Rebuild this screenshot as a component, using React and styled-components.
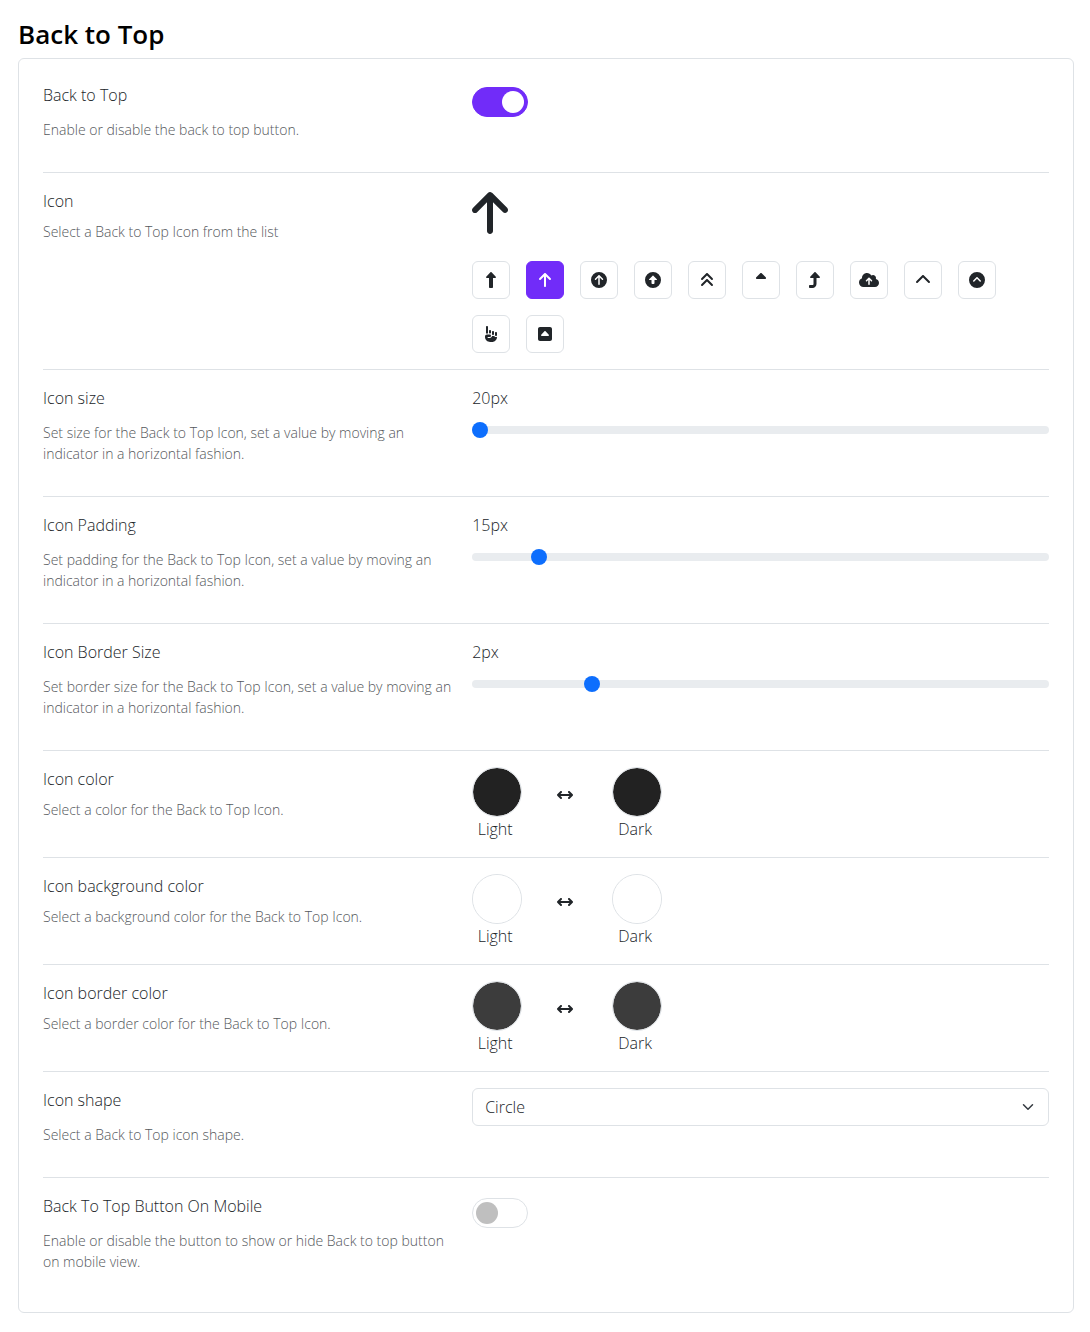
import React, { useState } from "react";
import styled, { createGlobalStyle } from "styled-components";
import {
  FaUpLong,
  FaArrowUp,
  FaCircleArrowUp,
  FaCircleUp,
  FaAnglesUp,
  FaSortUp,
  FaTurnUp,
  FaCloudArrowUp,
  FaChevronUp,
  FaCircleChevronUp,
  FaHandPointUp,
  FaSquareCaretUp,
  FaArrowsLeftRight,
} from "react-icons/fa6";

const ink = "#212529";
const line = "#dee2e6";
const accent = "#712cf9";

const GlobalStyle = createGlobalStyle`
  *, *::before, *::after { box-sizing: border-box; }
  body {
    margin: 0;
    background: #fff;
    color: ${ink};
    font-family: "Segoe UI", "Open Sans", "Noto Sans", sans-serif;
    font-size: 16px;
    font-weight: 300;
    line-height: 24px;
  }
`;

const Page = styled.main`
  padding: 16px 16px 18px 18px;
`;

const Title = styled.h1`
  margin: 0 0 6px;
  color: #000;
  font-size: 26px;
  font-weight: 600;
  line-height: 36px;
`;

const Card = styled.section`
  padding: 8px 24px;
  border: 1px solid ${line};
  border-radius: 6px;
`;

const Row = styled.div`
  padding: 16px 0;
  border-bottom: 1px solid ${line};

  &:last-child {
    border-bottom: 0;
  }
`;

const Columns = styled.div`
  display: grid;
  grid-template-columns: minmax(0, 5fr) minmax(0, 7fr);
  margin: 0 -12px;
`;

const TextCell = styled.div`
  padding: 0 8px 0 12px;
`;

const ControlCell = styled.div`
  padding: 0 12px;
`;

const Name = styled.label`
  display: block;
`;

const Hint = styled.p`
  margin: ${(p) => (p.$compact ? "8px 0 0" : "12px 0 16px")};
  color: #55585c;
  font-size: 14px;
  line-height: 21px;
`;

const Switch = styled.input`
  appearance: none;
  display: flex;
  align-items: center;
  width: 56px;
  height: 30px;
  margin: 4px 0;
  padding: 0 3px;
  border: 1px solid ${line};
  border-radius: 15px;
  background: #fff;
  cursor: pointer;

  &::before {
    content: "";
    width: 22px;
    height: 22px;
    border-radius: 50%;
    background: #bfbfbf;
  }

  &:checked {
    justify-content: flex-end;
    border-color: ${accent};
    background: ${accent};
  }

  &:checked::before {
    background: #fff;
  }
`;

const Preview = styled.div`
  display: flex;
  margin-bottom: 24px;

  svg {
    width: 36px;
    height: 48px;
  }
`;

const IconList = styled.div`
  display: flex;
  flex-wrap: wrap;
  gap: 16px;
`;

const IconButton = styled.button`
  display: flex;
  align-items: center;
  justify-content: center;
  width: 38px;
  height: 38px;
  padding: 0;
  border: 1px solid ${(p) => (p.$active ? accent : line)};
  border-radius: 6px;
  background: ${(p) => (p.$active ? accent : "#fff")};
  color: ${(p) => (p.$active ? "#fff" : ink)};
  font-size: 16px;
  cursor: pointer;

  svg {
    width: 20px;
    height: 16px;
  }
`;

const Value = styled.output`
  display: block;
  margin-bottom: 8px;
`;

const Range = styled.input`
  appearance: none;
  display: block;
  width: 100%;
  height: 24px;
  margin: 0;
  background: transparent;

  &::-webkit-slider-runnable-track {
    height: 8px;
    border-radius: 8px;
    background: #e9ecef;
  }

  &::-webkit-slider-thumb {
    appearance: none;
    width: 16px;
    height: 16px;
    margin-top: -4px;
    border-radius: 50%;
    background: #0d6efd;
  }
`;

const Pair = styled.div`
  display: flex;
  align-items: flex-start;
  gap: 39px;
`;

const Swatch = styled.div`
  width: 46px;
`;

const SwatchInput = styled.input`
  appearance: none;
  display: block;
  width: 50px;
  height: 50px;
  padding: 0;
  border: 1px solid ${line};
  border-radius: 50%;
  background: transparent;
  cursor: pointer;

  &::-webkit-color-swatch-wrapper {
    padding: 0;
  }

  &::-webkit-color-swatch {
    border: 0;
    border-radius: 50%;
  }
`;

const SwatchName = styled.label`
  display: block;
  text-align: center;
`;

const Between = styled.div`
  display: flex;
  align-items: center;
  height: 56px;
  font-size: 16px;
`;

const SelectBox = styled.div`
  position: relative;

  svg {
    position: absolute;
    top: 13px;
    right: 15px;
    pointer-events: none;
  }
`;

const Select = styled.select`
  appearance: none;
  display: block;
  width: 100%;
  height: 38px;
  padding: 0 36px 0 12px;
  border: 1px solid ${line};
  border-radius: 6px;
  background: #fff;
  color: inherit;
  font: inherit;
`;

const icons = [
  ["Long arrow", FaUpLong],
  ["Arrow", FaArrowUp],
  ["Circled thin arrow", FaCircleArrowUp],
  ["Circled arrow", FaCircleUp],
  ["Double angle", FaAnglesUp],
  ["Caret", FaSortUp],
  ["Turn up", FaTurnUp],
  ["Cloud arrow", FaCloudArrowUp],
  ["Chevron", FaChevronUp],
  ["Circled chevron", FaCircleChevronUp],
  ["Pointing hand", FaHandPointUp],
  ["Squared caret", FaSquareCaretUp],
];

function Setting({ id, name, hint, compact, group, children }) {
  return (
    <Row>
      <Columns>
        <TextCell>
          <Name
            as={group ? "div" : undefined}
            id={group ? id : undefined}
            htmlFor={group ? undefined : id}
          >
            {name}
          </Name>
          <Hint $compact={compact}>{hint}</Hint>
        </TextCell>
        <ControlCell>{children}</ControlCell>
      </Columns>
    </Row>
  );
}

function IconPicker({ labelledBy }) {
  const [selected, setSelected] = useState(1);
  const Current = icons[selected][1];
  return (
    <>
      <Preview>
        <Current />
      </Preview>
      <IconList role="group" aria-labelledby={labelledBy}>
        {icons.map(([label, Icon], i) => (
          <IconButton
            key={label}
            type="button"
            aria-label={label}
            aria-pressed={i === selected}
            $active={i === selected}
            onClick={() => setSelected(i)}
          >
            <Icon />
          </IconButton>
        ))}
      </IconList>
    </>
  );
}

function Slider({ id, min, max, initial }) {
  const [value, setValue] = useState(initial);
  return (
    <>
      <Value htmlFor={id}>{value}px</Value>
      <Range
        id={id}
        type="range"
        min={min}
        max={max}
        value={value}
        onChange={(e) => setValue(e.target.value)}
      />
    </>
  );
}

function ColorPair({ id, color }) {
  return (
    <Pair role="group" aria-labelledby={id}>
      <Swatch>
        <SwatchInput id={`${id}-light`} type="color" defaultValue={color} />
        <SwatchName htmlFor={`${id}-light`}>Light</SwatchName>
      </Swatch>
      <Between>
        <FaArrowsLeftRight />
      </Between>
      <Swatch>
        <SwatchInput id={`${id}-dark`} type="color" defaultValue={color} />
        <SwatchName htmlFor={`${id}-dark`}>Dark</SwatchName>
      </Swatch>
    </Pair>
  );
}

export default function App() {
  return (
    <Page>
      <GlobalStyle />
      <Title>Back to Top</Title>
      <Card>
        <Setting id="enabled" name="Back to Top" hint="Enable or disable the back to top button.">
          <Switch id="enabled" type="checkbox" role="switch" defaultChecked />
        </Setting>
        <Setting id="icon" group compact name="Icon" hint="Select a Back to Top Icon from the list">
          <IconPicker labelledBy="icon" />
        </Setting>
        <Setting
          id="size"
          name="Icon size"
          hint="Set size for the Back to Top Icon, set a value by moving an indicator in a horizontal fashion."
        >
          <Slider id="size" min={20} max={100} initial={20} />
        </Setting>
        <Setting
          id="padding"
          name="Icon Padding"
          hint="Set padding for the Back to Top Icon, set a value by moving an indicator in a horizontal fashion."
        >
          <Slider id="padding" min={5} max={100} initial={15} />
        </Setting>
        <Setting
          id="border"
          name="Icon Border Size"
          hint="Set border size for the Back to Top Icon, set a value by moving an indicator in a horizontal fashion."
        >
          <Slider id="border" min={0} max={10} initial={2} />
        </Setting>
        <Setting id="color" group compact name="Icon color" hint="Select a color for the Back to Top Icon.">
          <ColorPair id="color" color="#222222" />
        </Setting>
        <Setting
          id="background"
          group
          compact
          name="Icon background color"
          hint="Select a background color for the Back to Top Icon."
        >
          <ColorPair id="background" color="#ffffff" />
        </Setting>
        <Setting
          id="border-color"
          group
          compact
          name="Icon border color"
          hint="Select a border color for the Back to Top Icon."
        >
          <ColorPair id="border-color" color="#3c3c3c" />
        </Setting>
        <Setting id="shape" name="Icon shape" hint="Select a Back to Top icon shape.">
          <SelectBox>
            <Select id="shape" defaultValue="Circle">
              <option>Circle</option>
              <option>Square</option>
            </Select>
            <svg width="12" height="12" viewBox="0 0 16 16" fill="none" aria-hidden="true">
              <path
                d="m2 5 6 6 6-6"
                stroke="#343a40"
                strokeWidth="2"
                strokeLinecap="round"
                strokeLinejoin="round"
              />
            </svg>
          </SelectBox>
        </Setting>
        <Setting
          id="mobile"
          name="Back To Top Button On Mobile"
          hint="Enable or disable the button to show or hide Back to top button on mobile view."
        >
          <Switch id="mobile" type="checkbox" role="switch" />
        </Setting>
      </Card>
    </Page>
  );
}
